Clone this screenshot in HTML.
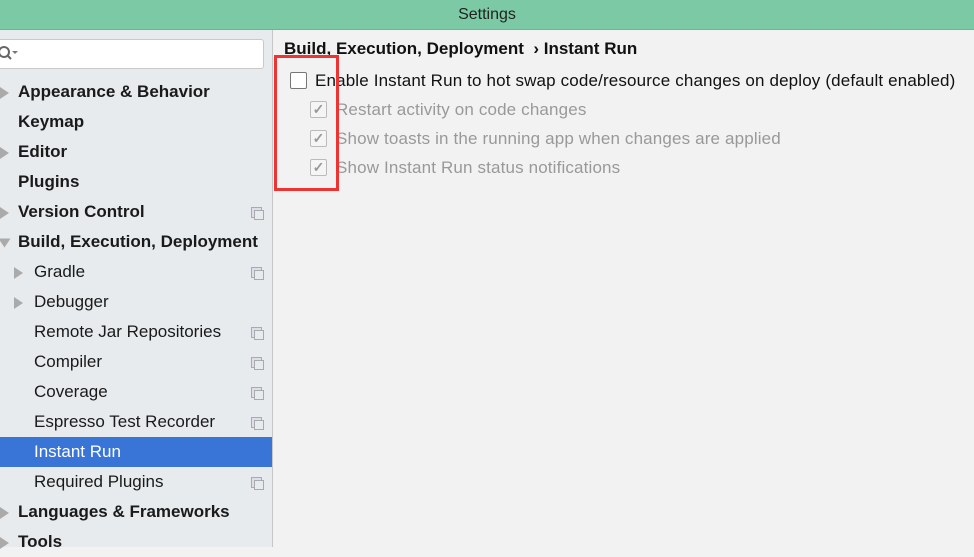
<html><head><style>
body{margin:0;width:974px;height:547px;overflow:hidden;font-family:"Liberation Sans",sans-serif;background:#f2f2f2;position:relative}
.t{position:absolute;left:0;top:0;width:974px;height:29px;background:#7ccaa5;border-bottom:1px solid #6ab592;text-align:center;line-height:29px;font-size:16px;color:#222}
.sb{position:absolute;left:0;top:30px;width:272px;height:517px;background:#e7ebee;border-right:1px solid #c6c6c6}
.sr{position:absolute;left:-5px;top:9px;width:267px;height:28px;background:#fff;border:1px solid #c9c9c9;border-radius:3px}
.r{position:absolute;left:0;width:272px;height:30px;line-height:30px;font-size:17px;color:#1a1a1a}
.b{font-weight:bold}
.r .a{position:absolute;top:10px;width:0;height:0;border-left:9px solid #aaa;border-top:6px solid transparent;border-bottom:6px solid transparent}
.ic{position:absolute;left:251px;top:10px;width:9px;height:9px;border:1px solid #aaa;background:#dde}
.ic:after{content:"";position:absolute;left:2px;top:2px;width:8px;height:8px;border:1px solid #aaa;background:#e7ebee}
.sel{background:#3875d7;color:#fff}
.cb{position:absolute;width:15px;height:15px;border:1px solid #bbb;border-radius:2px;background:#f5f5f5;color:#999;font-size:14px;line-height:15px;text-align:center;font-weight:bold}
.tx{position:absolute;font-size:17px;color:#999;letter-spacing:0.15px}
</style></head><body>
<div class="t">Settings</div>
<div class="sb">
<div class="sr"><svg width="30" height="28" style="position:absolute;left:4px;top:0"><circle cx="4" cy="12" r="5" fill="none" stroke="#666" stroke-width="2"/><line x1="8" y1="16" x2="11" y2="19" stroke="#666" stroke-width="2"/><path d="M12 11h6l-3 3z" fill="#777"/></svg></div>
</div>
<div class="r b" style="top:77px"><span class="a" style="left:0"></span><span style="position:absolute;left:18px">Appearance &amp; Behavior</span></div>
<div class="r b" style="top:107px"><span style="position:absolute;left:18px">Keymap</span></div>
<div class="r b" style="top:137px"><span class="a" style="left:0"></span><span style="position:absolute;left:18px">Editor</span></div>
<div class="r b" style="top:167px"><span style="position:absolute;left:18px">Plugins</span></div>
<div class="r b" style="top:197px"><span class="a" style="left:0"></span><span style="position:absolute;left:18px">Version Control</span><span class="ic"></span></div>
<div class="r b" style="top:227px"><span class="a" style="left:0;transform:rotate(90deg)"></span><span style="position:absolute;left:18px">Build, Execution, Deployment</span></div>
<div class="r" style="top:257px"><span class="a" style="left:14px"></span><span style="position:absolute;left:34px">Gradle</span><span class="ic"></span></div>
<div class="r" style="top:287px"><span class="a" style="left:14px"></span><span style="position:absolute;left:34px">Debugger</span></div>
<div class="r" style="top:317px"><span style="position:absolute;left:34px">Remote Jar Repositories</span><span class="ic"></span></div>
<div class="r" style="top:347px"><span style="position:absolute;left:34px">Compiler</span><span class="ic"></span></div>
<div class="r" style="top:377px"><span style="position:absolute;left:34px">Coverage</span><span class="ic"></span></div>
<div class="r" style="top:407px"><span style="position:absolute;left:34px">Espresso Test Recorder</span><span class="ic"></span></div>
<div class="r sel" style="top:437px"><span style="position:absolute;left:34px">Instant Run</span></div>
<div class="r" style="top:467px"><span style="position:absolute;left:34px">Required Plugins</span><span class="ic"></span></div>
<div class="r b" style="top:497px"><span class="a" style="left:0"></span><span style="position:absolute;left:18px">Languages &amp; Frameworks</span></div>
<div class="r b" style="top:527px"><span class="a" style="left:0"></span><span style="position:absolute;left:18px">Tools</span></div>
<div style="position:absolute;left:284px;top:39px;font-size:17px;font-weight:bold;color:#111">Build, Execution, Deployment &nbsp;› Instant Run</div>
<div class="cb" style="left:290px;top:72px;border-color:#777;background:#fff"></div>
<div class="tx" style="left:315px;top:71px;color:#111">Enable Instant Run to hot swap code/resource changes on deploy (default enabled)</div>
<div class="cb" style="left:310px;top:101px">✓</div><div class="tx" style="left:336px;top:100px">Restart activity on code changes</div>
<div class="cb" style="left:310px;top:130px">✓</div><div class="tx" style="left:336px;top:129px">Show toasts in the running app when changes are applied</div>
<div class="cb" style="left:310px;top:159px">✓</div><div class="tx" style="left:336px;top:158px">Show Instant Run status notifications</div>
<div style="position:absolute;left:274px;top:55px;width:59px;height:130px;border:3px solid #ee3333"></div>
</body></html>
